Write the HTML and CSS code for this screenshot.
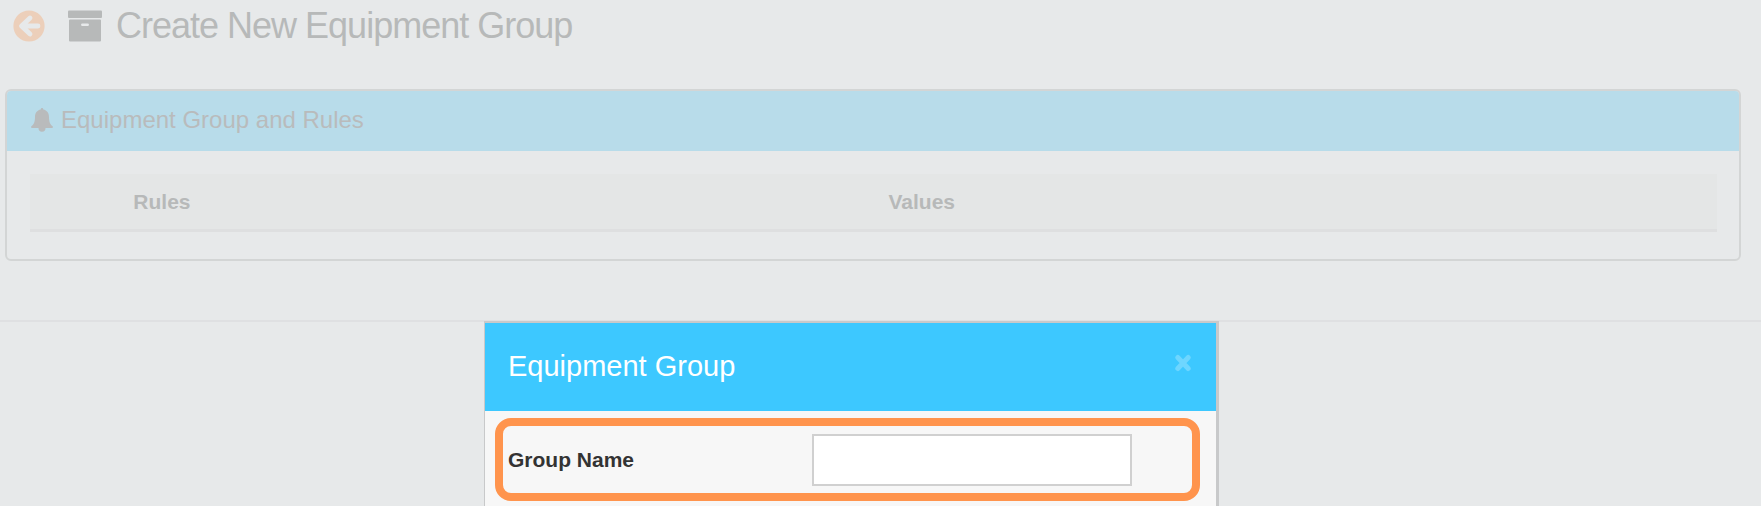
FILE: index.html
```html
<!DOCTYPE html>
<html lang="en">
<head>
  <meta charset="UTF-8">
  <meta name="viewport" content="width=device-width, initial-scale=1.0">
  <title>Create New Equipment Group</title>
  <link rel="stylesheet" href="styles.css">
</head>
<body>
  <header class="page-header">
    <a href="#back" class="back" aria-label="Back">
      <svg viewBox="0 0 32 32" width="32" height="32">
        <circle cx="16" cy="16" r="15.6" fill="currentColor"/>
        <path d="M17 8 L8.500 16 L17 24 M9 16 H25" fill="none" stroke="#e7e9ea" stroke-width="4.800" stroke-linejoin="round" stroke-linecap="round"/>
      </svg>
    </a>
    <svg class="archive" viewBox="0 0 34 32" width="34" height="32">
      <rect x="0" y="0.500" width="34" height="7.500" rx="1" fill="currentColor"/>
      <path fill="currentColor" fill-rule="evenodd" d="M2 9.500h30a1 1 0 0 1 1 1V30.500a1 1 0 0 1-1 1H2a1 1 0 0 1-1-1V10.500a1 1 0 0 1 1-1zM14.300 13.500a1.200 1.200 0 0 0 0 2.500h5.400a1.200 1.200 0 0 0 0-2.500z"/>
    </svg>
    <h1>Create New Equipment Group</h1>
  </header>

  <section class="panel">
    <div class="panel-heading">
      <svg viewBox="0 0 22 24" width="22" height="24">
        <path fill="currentColor" d="M11 0c.9 0 1.300.6 1.300 1.500 3.700.7 5.700 3.500 5.700 7.500 0 5 1.200 7.500 4 9.700 0 .8-.6 1.300-1.400 1.300H14.500a3.500 3.800 0 0 1-7 0H1.400C.6 20 0 19.500 0 18.700 2.800 16.500 4 14 4 9c0-4 2-6.800 5.700-7.500C9.700.6 10.100 0 11 0z"/>
      </svg>
      <h2>Equipment Group and Rules</h2>
    </div>
    <div class="panel-body">
      <table>
        <thead>
          <tr>
            <th class="col-check"></th>
            <th class="col-rules">Rules</th>
            <th>Values</th>
          </tr>
        </thead>
      </table>
    </div>
  </section>

  <hr>

  <!-- Equipment group modal -->
  <div class="modal-wrap">
    <form class="modal">
      <div class="modal-header">
        <h3>Equipment Group</h3>
        <button type="button" class="close" aria-label="Close">
          <svg viewBox="0 0 16 18" width="16" height="18">
            <path d="M2.800 3.500 L13.200 14.500 M13.200 3.500 L2.800 14.500" stroke="currentColor" stroke-width="5" stroke-linecap="round"/>
          </svg>
        </button>
      </div>
      <div class="modal-body">
        <div class="field highlight">
          <label for="groupName">Group Name</label>
          <input type="text" id="groupName">
        </div>
      </div>
    </form>
  </div>
</body>
</html>
```

FILE: styles.css
```css
:root {
  --bg: #e7e9ea;
  --muted: #b7b9b9;
  --line: #d3d5d5;
  --blue: #3dc8ff;
  --orange: #ff944d;
}

* {
  box-sizing: border-box;
}

body {
  margin: 0;
  background: var(--bg);
  color: var(--muted);
  font-family: "Liberation Sans", Arial, sans-serif;
  overflow: hidden;
}

h1, h2, h3 {
  margin: 0;
  font-weight: normal;
}

svg {
  display: block;
}

.page-header {
  display: flex;
  align-items: center;
  height: 51px;
  padding-left: 13px;
}

.back {
  color: #eccfba;
}

.archive {
  margin: 0 14px 0 23px;
}

h1 {
  font-size: 36px;
  line-height: 40px;
  letter-spacing: -1px;
}

.panel {
  margin: 38px 20px 0 5px;
  border: 2px solid var(--line);
  border-radius: 6px;
}

.panel-heading {
  display: flex;
  align-items: center;
  gap: 8px;
  height: 60px;
  padding: 0 24px 2px;
  border-radius: 4px 4px 0 0;
  background: #b8dcea;
  color: #b9bbbc;
}

h2 {
  font-size: 24px;
  line-height: 28px;
}

.panel-body {
  padding: 23px 22px 27px 23px;
}

table {
  width: 100%;
  table-layout: fixed;
  border-collapse: separate;
  border-spacing: 0;
}

th {
  height: 58px;
  padding: 0 15px;
  background: #e4e6e6;
  border-bottom: 3px solid #dedfe0;
  font-size: 21px;
  line-height: 24px;
  text-align: left;
}

.col-check {
  width: 5%;
}

.col-rules {
  width: 45%;
  padding-left: 19px;
}

hr {
  margin: 59px 0 0;
  border: 0;
  border-top: 2px solid #dfe0e2;
}

.modal-wrap {
  position: fixed;
  top: 321px;
  bottom: 0;
  left: 0;
  right: 0;
  display: flex;
  justify-content: center;
  padding-right: 58px;
  overflow: hidden;
}

.modal {
  width: 735px;
  border: solid #c8c9ca;
  border-width: 2px 3px 0 1px;
  background: #f7f7f7;
}

.modal-header {
  display: flex;
  align-items: center;
  justify-content: space-between;
  height: 88px;
  padding: 0 25px 2px 23px;
  background: var(--blue);
  color: white;
}

h3 {
  font-size: 29px;
  line-height: 32px;
}

.close {
  margin-bottom: 6px;
  padding: 0;
  border: 0;
  background: none;
  color: #6ed6ff;
  cursor: pointer;
}

.modal-body {
  padding: 7px 16px 0 10px;
}

.field {
  display: flex;
  align-items: center;
  padding: 8px 60px 7px 5px;
}

.highlight {
  border: 8px solid var(--orange);
  border-radius: 16px;
}

label {
  flex: 1;
  color: #333;
  font-size: 21px;
  font-weight: bold;
  line-height: 24px;
}

input {
  width: 320px;
  height: 52px;
  padding: 0 12px;
  border: 2px solid #d0d0d0;
  background: white;
  font: inherit;
  font-size: 21px;
}
```
